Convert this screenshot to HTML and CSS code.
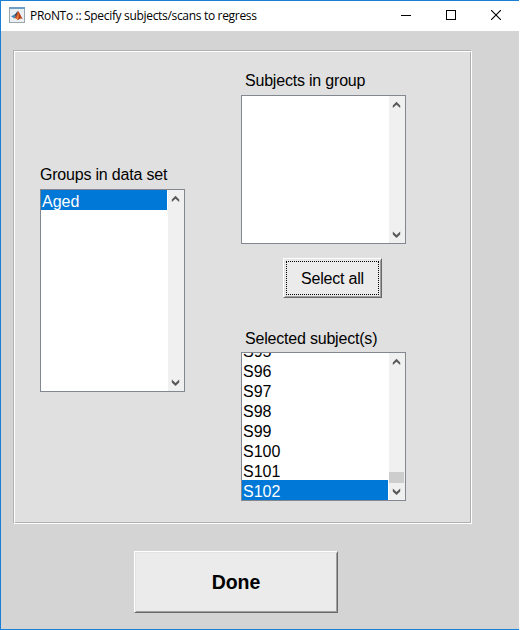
FILE: index.html
```html
<!DOCTYPE html>
<html lang="en">
<head>
<meta charset="utf-8">
<title>PRoNTo :: Specify subjects/scans to regress</title>
<link rel="stylesheet" href="styles.css">
</head>
<body>
<svg width="0" height="0" class="defs">
  <symbol id="up" viewBox="0 0 9 7"><path d="M4.5 0.8 8.2 4.4V7L4.5 3.7 0.8 7V4.4Z" fill="#585858"/></symbol>
  <symbol id="down" viewBox="0 0 9 7"><path d="M4.5 7 8.2 3.4V0.6L4.5 4 0.8 0.6V3.4Z" fill="#585858"/></symbol>
</svg>
<div class="window">
  <header class="titlebar">
    <svg class="app-icon" width="16" height="16" viewBox="0 0 16 16">
      <rect x="0.5" y="0.5" width="15" height="15" fill="#e9eff3" stroke="#9aa5ae"/>
      <rect x="0" y="0" width="16" height="2" fill="#6f9fc4"/>
      <path d="M2 9.2 5.2 7.8 7 9.5 5 11.2Z" fill="#3e86b8"/>
      <path d="M5.2 7.8C7 7 7.6 4.5 9 4L7.6 8.8 7 9.5Z" fill="#31455f"/>
      <path d="M9 4C10.5 4.8 11.6 9.5 14 12 12 10.8 11 11.5 8.8 13.2 7.8 11.6 7 11 5 11.2 7.5 9.8 8 6 9 4Z" fill="#b8401f"/>
      <path d="M9 4C9.2 7 8.3 9.6 7.2 11L8.8 13.2C9.9 10 9.8 7 9 4Z" fill="#ee8a3a"/>
    </svg>
    <h1 class="title">PRoNTo :: Specify subjects/scans to regress</h1>
    <div class="controls">
      <svg width="10" height="10" viewBox="0 0 10 10"><path d="M0 5.5H10" stroke="#000"/></svg>
      <svg width="10" height="10" viewBox="0 0 10 10"><rect x="0.5" y="0.5" width="9" height="9" fill="none" stroke="#000"/></svg>
      <svg width="10" height="10" viewBox="0 0 10 10"><path d="M0 0 10 10M10 0 0 10" stroke="#000" stroke-width="1.1"/></svg>
    </div>
  </header>
  <main class="content">
    <section class="panel">
      <div class="column groups">
        <div class="label">Groups in data set</div>
        <div class="listbox groups-list">
          <ul class="items"><li class="selected">Aged</li></ul>
          <div class="scrollbar">
            <svg width="9" height="7"><use href="#up"/></svg>
            <svg width="9" height="7"><use href="#down"/></svg>
          </div>
        </div>
      </div>
      <div class="column subjects">
        <div class="label indented">Subjects in group</div>
        <div class="listbox">
          <ul class="items"></ul>
          <div class="scrollbar">
            <svg width="9" height="7"><use href="#up"/></svg>
            <svg width="9" height="7"><use href="#down"/></svg>
          </div>
        </div>
        <button class="button select-all"><span>Select all</span></button>
        <div class="label indented lower">Selected subject(s)</div>
        <div class="listbox">
          <ul class="items scrolled">
            <li>S95</li><li>S96</li><li>S97</li><li>S98</li><li>S99</li><li>S100</li><li>S101</li><li class="selected">S102</li>
          </ul>
          <div class="scrollbar">
            <svg width="9" height="7"><use href="#up"/></svg>
            <div class="thumb"></div>
            <svg width="9" height="7"><use href="#down"/></svg>
          </div>
        </div>
      </div>
    </section>
    <button class="button done">Done</button>
  </main>
</div>
</body>
</html>
```

FILE: styles.css
```css
* { box-sizing: border-box; }
body {
  margin: 0;
  background: #fff;
  font-family: "Liberation Sans", Arial, sans-serif;
  font-size: 16px;
  color: #000;
}
.defs { display: block; }
.window {
  display: flex;
  flex-direction: column;
  width: 519px;
  height: 630px;
  border: 1px solid #1a80d3;
  border-right: 0;
  background: #d4d4d4;
}
.titlebar {
  display: flex;
  align-items: center;
  height: 30px;
  padding: 0 18px 2px 8px;
  background: #fff;
}
.title {
  margin: 2px 0 0 5px;
  font: 12px/16px "Open Sans", "Noto Sans", sans-serif;
  letter-spacing: -0.32px;
  white-space: nowrap;
}
.controls { display: flex; gap: 35px; margin-left: auto; }
.controls svg { display: block; }
.content { padding: 19px 0 0 12px; }
.panel {
  display: flex;
  gap: 56px;
  width: 459px;
  height: 474px;
  padding-left: 26px;
  border: 1px solid #b0b0b0;
  border-right-color: #fff;
  border-bottom-color: #fff;
  box-shadow: inset 1px 1px #fff, inset -1px -1px #b0b0b0;
  background: #e0e0e0;
}
.groups { width: 145px; padding-top: 114px; }
.subjects { width: 165px; padding-top: 20px; }
.label {
  height: 24px;
  line-height: 20px;
  letter-spacing: -0.2px;
  white-space: nowrap;
}
.indented { padding-left: 4px; }
.lower { line-height: 22px; }
.listbox {
  display: flex;
  height: 149px;
  border: 1px solid #828790;
  background: #fff;
  overflow: hidden;
}
.groups-list { height: 203px; }
.items {
  display: flex;
  flex-direction: column;
  flex: 1;
  margin: 0 1px 0 0;
  padding: 0;
  list-style: none;
}
.scrolled { justify-content: flex-end; }
.items li { flex: none; height: 20px; padding-left: 1px; line-height: 24px; }
.items .selected { background: #0078d7; color: #fff; }
.scrollbar {
  display: flex;
  flex-direction: column;
  justify-content: space-between;
  align-items: center;
  width: 16px;
  padding: 5px 1px 5px 0;
  background: #f0f0f0;
}
.scrollbar svg { display: block; }
.thumb { width: 15px; height: 11px; margin: auto 0 5px; background: #cdcdcd; }
.button {
  display: block;
  border: 1px solid #fff;
  border-right-color: #696969;
  border-bottom-color: #696969;
  box-shadow: inset 1px 1px #e3e3e3, inset -1px -1px #a0a0a0;
  background: #ebebeb;
  color: #000;
  font: inherit;
}
.select-all { width: 99px; height: 40px; margin: 14px 0 30px 42px; padding: 2px; }
.select-all span {
  display: flex;
  align-items: center;
  justify-content: center;
  height: 100%;
  padding-top: 2px;
  border: 1px dotted #000;
  letter-spacing: -0.2px;
}
.done {
  width: 204px;
  height: 62px;
  margin: 27px 0 0 121px;
  font-size: 19.5px;
  font-weight: bold;
}
```
